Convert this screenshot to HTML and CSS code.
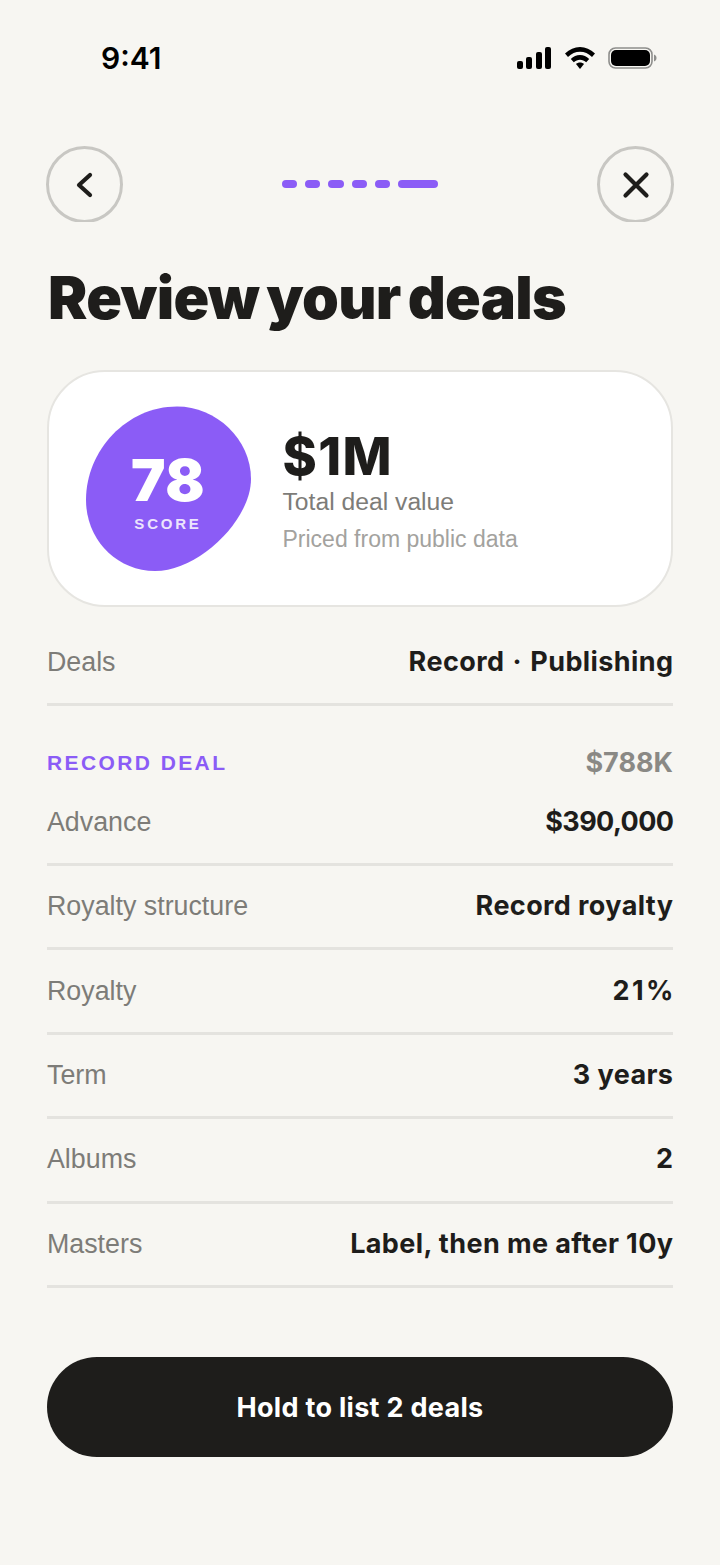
FILE: index.html
```html
<!DOCTYPE html>
<html lang="en">

<head>
    <meta charset="UTF-8">
    <meta name="viewport" content="width=device-width, initial-scale=1.0">
    <title>Review your deals</title>
    <link rel="stylesheet" href="styles.css">
</head>

<body>
    <div class="status_bar">
        <span class="status_time">9:41</span>
        <div class="status_icons">
            <svg class="icon_signal" width="36" height="22" viewBox="0 0 36 22">
                <rect x="1" y="14" width="6" height="8" rx="2"></rect>
                <rect x="10" y="10" width="6" height="12" rx="2"></rect>
                <rect x="20" y="5" width="6" height="17" rx="2"></rect>
                <rect x="29" y="0" width="6" height="22" rx="2"></rect>
            </svg>
            <svg class="icon_wifi" width="30" height="22" viewBox="0 0 30 22">
                <path d="M15 0C9.5 0 4.5 2.2 0 6.5L3 10C6.5 6.6 10.5 4.8 15 4.8C19.5 4.8 23.5 6.6 27 10L30 6.5C25.5 2.2 20.5 0 15 0Z"></path>
                <path d="M15 8C11.5 8 8.5 9.4 5.8 12L8.8 15.3C10.6 13.6 12.6 12.7 15 12.7C17.4 12.7 19.4 13.6 21.2 15.3L24.2 12C21.5 9.4 18.5 8 15 8Z"></path>
                <path d="M15 15.5C13.4 15.5 12.2 16 11 17L15 22L19 17C17.8 16 16.6 15.5 15 15.5Z"></path>
            </svg>
            <svg class="icon_battery" width="49" height="22" viewBox="0 0 49 22">
                <rect x="1" y="1" width="43" height="20" rx="6.5" fill="none" stroke="#8e8e8c" stroke-width="1.6"></rect>
                <rect x="3" y="3" width="39" height="16" rx="5"></rect>
                <path d="M46 7.5C48 8.5 48.5 9.5 48.5 11C48.5 12.5 48 13.5 46 14.5Z" fill="#8e8e8c"></path>
            </svg>
        </div>
    </div>

    <div class="nav">
        <button class="round_btn">
            <svg width="22" height="26" viewBox="0 0 22 26">
                <path d="M16 3L5 13L16 23" fill="none" stroke="#1e1d1b" stroke-width="4.2" stroke-linecap="round" stroke-linejoin="round"></path>
            </svg>
        </button>
        <div class="steps">
            <span class="step"></span>
            <span class="step"></span>
            <span class="step"></span>
            <span class="step"></span>
            <span class="step"></span>
            <span class="step step_active"></span>
        </div>
        <button class="round_btn">
            <svg width="28" height="28" viewBox="0 0 28 28">
                <path d="M3.5 3.5L24.5 24.5M24.5 3.5L3.5 24.5" fill="none" stroke="#1e1d1b" stroke-width="4.2" stroke-linecap="round"></path>
            </svg>
        </button>
    </div>

    <h1 class="title">Review your deals</h1>

    <div class="summary_card">
        <div class="score">
            <svg class="score_blob" width="165" height="165" viewBox="0 0 165 165">
                <path d="M91 .5C130 .5 165 33 165 73C165 114 113 165 69 165C30 165 0 133 0 94C0 44 41 .5 91 .5Z"></path>
            </svg>
            <span class="score_value">78</span>
            <span class="score_label">SCORE</span>
        </div>
        <div class="summary_text">
            <div class="summary_amount">$1M</div>
            <div class="summary_name">Total deal value</div>
            <div class="summary_note">Priced from public data</div>
        </div>
    </div>

    <div class="row row_first">
        <span class="row_label">Deals</span>
        <span class="row_value row_pair">Record · Publishing</span>
    </div>

    <div class="section_head">
        <span class="section_name">RECORD DEAL</span>
        <span class="section_total">$788K</span>
    </div>

    <div class="row row_compact">
        <span class="row_label">Advance</span>
        <span class="row_value row_amount">$390,000</span>
    </div>
    <div class="row">
        <span class="row_label">Royalty structure</span>
        <span class="row_value">Record royalty</span>
    </div>
    <div class="row">
        <span class="row_label">Royalty</span>
        <span class="row_value row_percent">21%</span>
    </div>
    <div class="row">
        <span class="row_label">Term</span>
        <span class="row_value">3 years</span>
    </div>
    <div class="row">
        <span class="row_label">Albums</span>
        <span class="row_value">2</span>
    </div>
    <div class="row">
        <span class="row_label">Masters</span>
        <span class="row_value">Label, then me after 10y</span>
    </div>

    <button class="hold_btn">Hold to list 2 deals</button>
</body>

</html>
```

FILE: styles.css
```css
* {
    margin: 0;
    padding: 0;
    box-sizing: border-box;
}

html {
    background: #f7f6f2;
}

body {
    height: 1565px;
    overflow: hidden;
    padding: 0 47px;
    background: #f7f6f2;
    font-family: "Liberation Sans", Arial, sans-serif;
    color: #1e1d1b;
}

.status_bar {
    height: 146px;
    padding: 40px 16px 0 54px;
    display: flex;
    justify-content: space-between;
    align-items: flex-start;
}

.status_time {
    font-family: Inter, sans-serif;
    font-size: 30px;
    line-height: 36px;
    font-weight: 600;
    color: #000;
}

.status_icons {
    display: flex;
    align-items: center;
    gap: 13px;
    padding-top: 7px;
}

.status_icons svg {
    display: block;
    fill: #000;
}

/* the circles are cut off flat at the bottom, same as the design */
.nav {
    height: 76px;
    overflow: hidden;
    display: flex;
    justify-content: space-between;
    align-items: flex-start;
    margin: 0 -1px;
}

.round_btn {
    width: 77px;
    height: 77px;
    display: flex;
    justify-content: center;
    align-items: center;
    background: transparent;
    border: solid 3px #c8c7c3;
    border-radius: 50%;
}

.steps {
    display: flex;
    gap: 8px;
    margin-top: 34px;
}

.step {
    width: 15.2px;
    height: 8px;
    border-radius: 4px;
    background: #8b5cf6;
}

.step_active {
    width: 40px;
}

.title {
    margin-top: 41px;
    margin-bottom: 37px;
    margin-left: 1px;
    font-family: Inter, sans-serif;
    font-size: 59px;
    line-height: 70px;
    font-weight: 900;
    letter-spacing: -.7px;
    word-spacing: -4px;
    white-space: nowrap;
}

.summary_card {
    height: 237px;
    display: flex;
    align-items: center;
    gap: 32px;
    padding-left: 36.5px;
    background: #fff;
    border: solid 2.5px #e6e5e1;
    border-radius: 58px;
}

.score {
    position: relative;
    width: 165px;
    height: 165px;
    display: flex;
    flex-flow: column;
    align-items: center;
    color: white;
}

.score_blob {
    position: absolute;
    top: 0;
    left: 0;
    fill: #8b5cf6;
}

.score_value,
.score_label {
    position: relative;
}

.score_value {
    margin-top: 40px;
    font-family: Inter, sans-serif;
    font-size: 58px;
    line-height: 68px;
    font-weight: 900;
    letter-spacing: .5px;
}

.score_label {
    margin-top: 1px;
    font-size: 15px;
    line-height: 18px;
    font-weight: 700;
    letter-spacing: 2.8px;
    color: #ece4fd;
}

.summary_text {
    padding-top: 4px;
}

.summary_amount {
    font-family: Inter, sans-serif;
    font-size: 52px;
    line-height: 58px;
    font-weight: 800;
    letter-spacing: 1.4px;
}

.summary_name {
    margin-top: 1px;
    font-size: 24.7px;
    line-height: 30px;
    color: #7d7c78;
}

.summary_note {
    margin-top: 8px;
    font-size: 23px;
    line-height: 28px;
    color: #a3a29e;
}

.row {
    height: 84.4px;
    display: flex;
    justify-content: space-between;
    align-items: center;
    border-bottom: solid 3px #e4e3df;
    white-space: nowrap;
}

.row_first {
    height: 99px;
    padding-top: 15px;
}

.row_compact {
    height: 84px;
}

.row_label {
    font-size: 26.8px;
    color: #7d7c78;
}

.row_value {
    margin-bottom: 2px;
    margin-right: -.4px;
    font-family: Inter, sans-serif;
    font-size: 27px;
    font-weight: 700;
    letter-spacing: .4px;
}

.row_pair {
    word-spacing: 1.5px;
}

.row_amount {
    letter-spacing: -.6px;
}

.row_percent {
    margin-right: -3px;
    letter-spacing: 2.5px;
}

.section_head {
    display: flex;
    justify-content: space-between;
    align-items: center;
    height: 32px;
    margin-top: 40px;
    margin-bottom: 4px;
}

.section_name {
    margin-top: 2px;
    font-size: 21px;
    font-weight: 700;
    letter-spacing: 2.4px;
    color: #8b5cf6;
}

.section_total {
    font-family: Inter, sans-serif;
    font-size: 27px;
    font-weight: 700;
    color: #8a8985;
}

.hold_btn {
    display: block;
    width: 100%;
    height: 100px;
    margin-top: 69px;
    padding-top: 1px;
    background: #1e1d1b;
    color: white;
    border: none;
    border-radius: 50px;
    font-family: Inter, sans-serif;
    font-size: 27px;
    font-weight: 700;
    letter-spacing: .3px;
}
```
